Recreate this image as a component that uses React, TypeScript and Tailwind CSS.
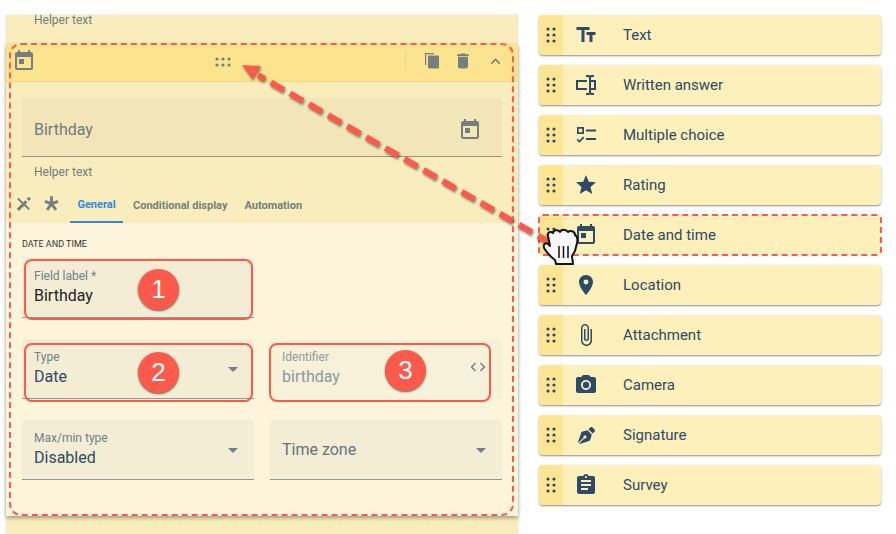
import React from "react";
import {
  MdToday,
  MdTextFields,
  MdStar,
  MdPlace,
  MdAttachFile,
  MdPhotoCamera,
  MdAssignment,
  MdDelete,
  MdExpandLess,
  MdCode,
  MdArrowDropDown,
} from "react-icons/md";
import { FaPenNib } from "react-icons/fa";

const WrittenIcon = ({ className }: { className?: string }) => (
  <svg viewBox="0 0 24 24" className={className} fill="currentColor">
    <path d="M17,7H22V17H17V19A1,1 0 0,0 18,20H20V22H17.5C16.95,22 16,21.55 16,21C16,21.55 15.05,22 14.5,22H12V20H14A1,1 0 0,0 15,19V5A1,1 0 0,0 14,4H12V2H14.5C15.05,2 16,2.45 16,3C16,2.45 16.95,2 17.5,2H20V4H18A1,1 0 0,0 17,5V7M2,7H13V9H4V15H13V17H2V7M20,15V9H17V15H20Z" />
  </svg>
);

const ChoiceIcon = ({ className }: { className?: string }) => (
  <svg viewBox="0 0 24 24" className={className} fill="currentColor">
    <path d="M3 4h7v7H3V4zm1.7 1.7v3.6h3.6V5.7H4.700zM12 6.500h10v2H12zM12 15h10v2H12zM2.600 17l1.200-1.200 1.600 1.600 3.800-3.800 1.200 1.200-5 5z" />
  </svg>
);

// six dot grip, used on every row
const Grip = ({ className }: { className?: string }) => (
  <svg viewBox="0 0 10 16" className={className} fill="currentColor">
    {[2, 8].map((x) =>
      [2, 8, 14].map((y) => <circle key={`${x}-${y}`} cx={x} cy={y} r="1.600" />)
    )}
  </svg>
);

const CopyIcon = ({ className }: { className?: string }) => (
  <svg viewBox="0 0 18 18" className={className} fill="currentColor">
    <path d="M2 1h9v1.200H3.200V13H2z" />
    <rect x="5" y="3.500" width="11" height="13" rx="1" />
  </svg>
);

const ToolsIcon = ({ className }: { className?: string }) => (
  <svg viewBox="0 0 24 24" className={className} fill="none" stroke="currentColor">
    <path d="M4 5l16 15" strokeWidth="2.800" />
    <path d="M4 21L16 9" strokeWidth="4.400" />
    <path d="M18 7l3-3" strokeWidth="4.400" />
  </svg>
);

const AsteriskIcon = ({ className }: { className?: string }) => (
  <svg viewBox="0 0 24 24" className={className} fill="none" stroke="currentColor" strokeWidth="4.600">
    <path d="M12 13V1M12 13L1.500 9.500M12 13L22.500 9.500M12 13L5 23M12 13L19 23" />
  </svg>
);

const items = [
  { label: "Text", icon: <MdTextFields className="w-6 h-6" /> },
  { label: "Written answer", icon: <WrittenIcon className="w-6 h-6" /> },
  { label: "Multiple choice", icon: <ChoiceIcon className="w-6 h-6" /> },
  { label: "Rating", icon: <MdStar className="w-6 h-6" /> },
  { label: "Date and time", icon: <MdToday className="w-6 h-6" />, dashed: true },
  { label: "Location", icon: <MdPlace className="w-6 h-6" /> },
  { label: "Attachment", icon: <MdAttachFile className="w-6 h-6" /> },
  { label: "Camera", icon: <MdPhotoCamera className="w-6 h-6" /> },
  { label: "Signature", icon: <FaPenNib className="w-[17px] h-[17px]" /> },
  { label: "Survey", icon: <MdAssignment className="w-6 h-6" /> },
];

const Field = ({
  label,
  value,
  muted,
  dark,
  caret,
  code,
}: {
  label?: string;
  value: string;
  muted?: boolean;
  dark?: boolean;
  caret?: boolean;
  code?: boolean;
}) => (
  <div
    className={`relative h-[60px] rounded-t bg-[#f3edd6] border-b px-3 flex flex-col justify-center ${
      muted ? "border-transparent bg-[#f7f1da]" : "border-[#8f9a9f]"
    } ${label ? "pb-[2px]" : ""}`}
  >
    {label && (
      <span className={`text-xs leading-[18px] ${muted ? "text-[#8f9a9c]" : "text-[#71808a]"}`}>{label}</span>
    )}
    <span
      className={`text-base leading-[22px] ${
        muted ? "text-[#8d999e]" : dark ? "text-[#222]" : label ? "text-[#2d4a66]" : "text-[#64727f]"
      }`}
    >
      {value}
    </span>
    {caret && <MdArrowDropDown className="absolute right-[9px] top-[18px] w-6 h-6 text-[#71808a]" />}
    {code && <MdCode className="absolute right-[15px] top-[19px] w-[18px] h-[18px] text-[#71808a]" />}
  </div>
);

const Badge = ({ n, className }: { n: number; className: string }) => (
  <div
    className={`absolute w-[41px] h-[41px] rounded-full bg-[#fd5a4c] text-white flex items-center justify-center text-[26px] font-['Liberation_Sans'] shadow-[0_1px_2px_rgba(0,0,0,0.6)] ${className}`}
  >
    {n}
  </div>
);

export default function App() {
  return (
    <div className="relative w-[896px] h-[534px] bg-white overflow-hidden font-['Roboto',sans-serif] flex pt-[15px] pl-[6px]">
      {/* form column */}
      <div className="w-[512px] h-[519px] bg-[#f9edbd] shadow-[0_0_2px_rgba(0,0,0,0.15)] flex flex-col shrink-0">
        <div className="h-[29px] pl-[28px] text-xs text-[#6f7c80] leading-[11px]">Helper text</div>
        <div className="h-[472px] bg-[#fcf5dc] shadow-[0_2px_4px_rgba(0,0,0,0.35)] flex flex-col">
          <div className="h-[38px] bg-[#fce48f] border-b border-[#f2d77c] flex items-center relative text-[#748080] shrink-0 pb-[3px]">
            <MdToday className="w-6 h-6 ml-[6px]" />
            <Grip className="absolute left-[212px] top-[10px] w-[10px] h-[16px] rotate-90" />
            <div className="ml-auto h-5 w-px bg-[#ecd88a] mr-[17px]" />
            <CopyIcon className="w-[18px] h-[18px] mr-[12px]" />
            <MdDelete className="w-5 h-5 mr-[13px]" />
            <MdExpandLess className="w-[19px] h-[19px] mr-[13px]" />
          </div>
          <div className="h-[141px] bg-[#f9edbd] shrink-0 flex flex-col">
            <div className="mt-4 mx-[16px] h-[60px] w-[480px] bg-[#f2e6b8] rounded-t border-b border-[#8f958a] flex items-center justify-between pl-3 pr-[20px] pt-[6px]">
              <span className="text-base text-[#6f7c80]">Birthday</span>
              <MdToday className="w-6 h-6 text-[#748080]" />
            </div>
            <div className="pl-[28px] pt-[8px] text-xs leading-[14px] text-[#6f7c80]">Helper text</div>
            <div className="flex items-center h-[42px] mt-[3px] relative text-[#748080]">
              <ToolsIcon className="absolute left-[9px] top-[13px] w-[17px] h-[17px]" />
              <AsteriskIcon className="absolute left-[38px] top-[13px] w-[15px] h-[16px]" />
              <div className="ml-[64px] w-[53px] h-full flex items-center justify-center pt-[8px] text-[11px] font-bold text-[#2d8ae0] border-b-2 border-[#2d8ae0]">
                General
              </div>
              <span className="ml-[10px] pt-[8px] text-[11px] font-bold">Conditional display</span>
              <span className="ml-[17px] pt-[8px] text-[11px] font-bold">Automation</span>
            </div>
          </div>
          <div className="flex-1 px-[16px]">
            <div className="text-[9px] leading-[12px] mt-[15px] text-[#333] uppercase">Date and time</div>
            <div className="grid grid-cols-2 gap-x-[16px] gap-y-[21px] mt-[8px] w-[480px]">
              <Field label="Field label *" value="Birthday" dark />
              <div />
              <Field label="Type" value="Date" caret />
              <Field label="Identifier" value="birthday" muted code />
              <Field label="Max/min type" value="Disabled" caret />
              <Field value="Time zone" caret />
            </div>
          </div>
        </div>
      </div>

      {/* field type list */}
      <div className="ml-[21px] w-[342px] flex flex-col gap-[10px]">
        {items.map((item) => (
          <div
            key={item.label}
            className={`relative h-10 rounded bg-[#fef0bb] flex items-center text-[#2d4a66] shadow-[0_1px_2px_rgba(0,0,0,0.45)] overflow-hidden ${
              item.dashed ? "outline-2 outline-dashed outline-[#fd5a4c] -outline-offset-1 shadow-none" : ""
            }`}
          >
            <div className="w-6 h-full bg-[#fde594] flex items-center justify-center shrink-0">
              <Grip className="w-[10px] h-[16px]" />
            </div>
            <div className="w-[46px] flex items-center justify-center shrink-0">{item.icon}</div>
            <span className="ml-[14px] text-[15px]">{item.label}</span>
          </div>
        ))}
      </div>

      {/* annotations */}
      <div className="absolute left-[9px] top-[43px] w-[505px] h-[473px] rounded-[12px] border-2 border-dashed border-[#fd5a4c] pointer-events-none" />
      <div className="absolute left-[24px] top-[259px] w-[229px] h-[61px] rounded-lg border-2 border-[#fd5a4c]" />
      <div className="absolute left-[24px] top-[343px] w-[229px] h-[59px] rounded-lg border-2 border-[#fd5a4c]" />
      <div className="absolute left-[269px] top-[343px] w-[222px] h-[59px] rounded-lg border-2 border-[#fd5a4c]" />
      <Badge n={1} className="left-[138px] top-[269px]" />
      <Badge n={2} className="left-[138px] top-[352px]" />
      <Badge n={3} className="left-[385px] top-[350px]" />

      <svg className="absolute inset-0 w-[896px] h-[534px] pointer-events-none" viewBox="0 0 896 534">
        <g className="drop-shadow-[1px_2px_1px_rgba(0,0,0,0.45)]">
          <line x1="551" y1="243" x2="258" y2="75" stroke="#fd5a4c" strokeWidth="6" strokeDasharray="15 7" />
          <path d="M242 65 L261 66 L252 79 Z" fill="#fd5a4c" />
        </g>
        {/* grabbing hand */}
        <path
          d="M548 236 C547 232 551 231 553 233 C553 230 558 229 560 232 C561 229 566 229 568 232 C570 230 575 231 575 235 C577 236 578 239 577 243 L575 251 L572 256 L573 264 L556 264 L555 260 C551 257 547 253 544 248 C543 245 545 242 548 244 L550 246 Z"
          fill="#f8f8f8"
          stroke="#111"
          strokeWidth="2"
          strokeLinejoin="round"
        />
        <path d="M559 246 V258 M563.500 246 V258 M568 246 V258" stroke="#111" strokeWidth="1.500" />
      </svg>
    </div>
  );
}
